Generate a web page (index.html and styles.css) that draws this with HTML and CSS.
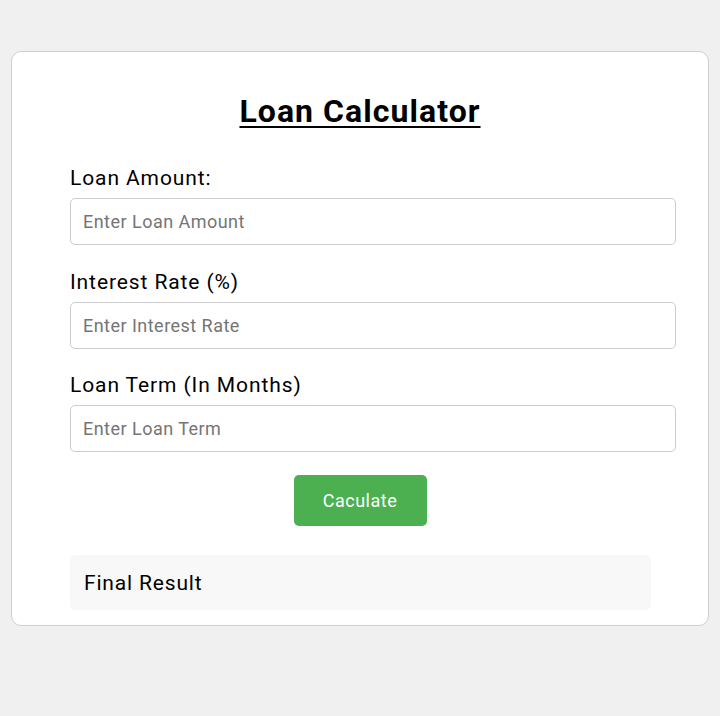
FILE: index.html
```html
<!DOCTYPE html>
<html>
<head>
<meta charset="utf-8">
<link rel="stylesheet" href="styles.css">
</head>
<body>
<div class="card">
  <h1 class="title">Loan Calculator</h1>
  <div class="field">
    <label class="label" for="amount">Loan Amount:</label>
    <input class="input" id="amount" type="text" placeholder="Enter Loan Amount">
  </div>
  <div class="field">
    <label class="label" for="rate">Interest Rate (%)</label>
    <input class="input" id="rate" type="text" placeholder="Enter Interest Rate">
  </div>
  <div class="field">
    <label class="label" for="term">Loan Term (In Months)</label>
    <input class="input" id="term" type="text" placeholder="Enter Loan Term">
  </div>
  <div class="actions">
    <button class="btn" type="button">Caculate</button>
  </div>
  <div class="result">Final Result</div>
</div>
</body>
</html>
```

FILE: styles.css
```css
html, body {
  margin: 0;
  padding: 0;
}
body {
  background: #f0f0f0;
  font-family: Roboto, "Liberation Sans", sans-serif;
  color: #000;
}
.card {
  box-sizing: border-box;
  width: 698px;
  margin: 51px 0 0 11px;
  padding: 41px 58px 15px 58px;
  background: #fff;
  border: 1px solid #cfcfcf;
  border-radius: 10px;
}
.title {
  margin: 0 0 36px 0;
  font-size: 32px;
  font-weight: 700;
  line-height: 37px;
  letter-spacing: 1.05px;
  text-align: center;
  text-decoration: underline;
  text-decoration-thickness: 2px;
  text-underline-offset: 4px;
}
.field {
  margin-bottom: 24.5px;
}
.label {
  display: block;
  font-size: 21px;
  line-height: 24px;
  letter-spacing: 0.9px;
  margin-bottom: 8px;
}
.input {
  display: block;
  box-sizing: content-box;
  width: 580px;
  height: 21px;
  margin: 0;
  padding: 12px;
  border: 1px solid #cccccc;
  border-radius: 5px;
  font-family: Roboto, "Liberation Sans", sans-serif;
  font-size: 18px;
  letter-spacing: 0.47px;
  color: #000;
  background: #fff;
  outline: none;
}
.input::placeholder {
  color: #757575;
}
.actions {
  display: flex;
  justify-content: center;
  margin-top: -1.5px;
}
.btn {
  width: 133px;
  height: 51px;
  padding: 0;
  border: none;
  border-radius: 5px;
  background: #4caf50;
  color: #fff;
  font-family: Roboto, "Liberation Sans", sans-serif;
  font-size: 18px;
  letter-spacing: 0.5px;
}
.result {
  margin-top: 29px;
  width: 581px;
  box-sizing: border-box;
  height: 55px;
  padding: 0 14px;
  display: flex;
  align-items: center;
  background: #f8f8f8;
  border-radius: 5px;
  font-size: 21px;
  letter-spacing: 0.83px;
}
```
